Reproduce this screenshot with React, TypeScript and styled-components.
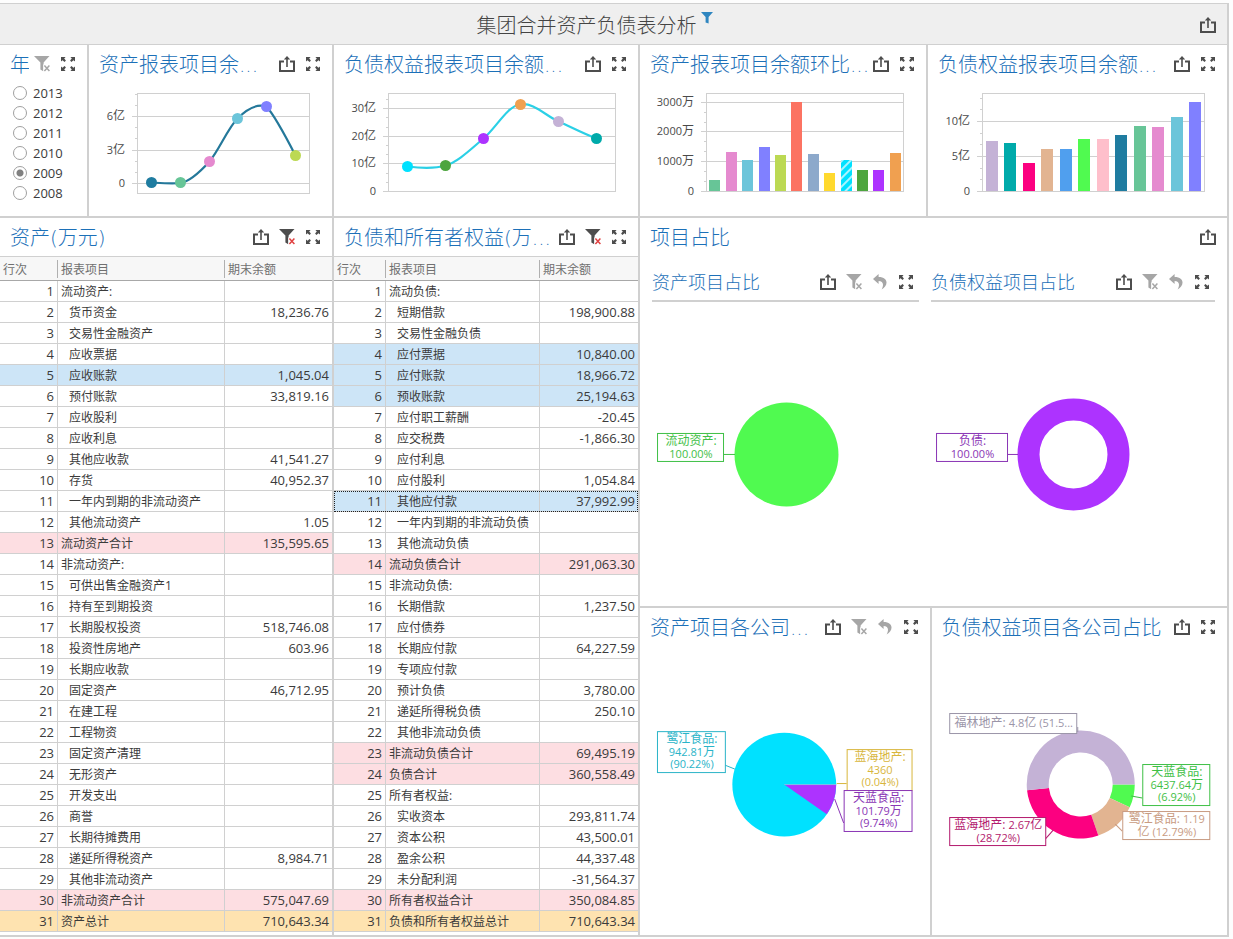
import React from "react";
import styled, { createGlobalStyle, css } from "styled-components";

const LINE = "#d0d0d0";
const INK = "#4d4d4d";
const MUTED = "#a6a6a6";
const FONT = `"Open Sans", "Noto Sans CJK SC", sans-serif`;
const TITLE_FONT = `"DejaVu Sans", "Noto Sans CJK SC", sans-serif`;

const GlobalStyle = createGlobalStyle`
  *, *::before, *::after { box-sizing: border-box; }
  body {
    margin: 0;
    background: #fdfdfd;
    color: #3b3b3b;
    font-family: ${FONT};
    font-size: 13px;
  }
`;

/* ---------- layout ---------- */

const Dashboard = styled.div`
  margin: 3px 4px 2px 0;
  background: #fff;
  border-top: 1px solid ${LINE};
`;

const TopBar = styled.header`
  display: flex;
  align-items: center;
  gap: 10px;
  height: 41px;
  padding: 3px 10px 0 0;
  background: #efefef;
  border-right: 2px solid ${LINE};
  border-bottom: 1px solid ${LINE};
`;

const Heading = styled.div`
  flex: 1;
  display: flex;
  justify-content: center;
  gap: 4px;
`;

const PageTitle = styled.h1`
  margin: 0;
  font-size: 20px;
  font-weight: 300;
  line-height: 28px;
  color: #444;
`;

const Board = styled.main`
  display: grid;
  grid-template-columns:
    minmax(0, 89fr) minmax(0, 245fr) minmax(0, 306fr)
    minmax(0, 288fr) minmax(0, 301fr);
`;

const Panel = styled.section<{ $span?: number; $grow?: number }>`
  display: flex;
  flex-direction: column;
  min-width: 0;
  min-height: 0;
  border-right: 2px solid ${LINE};
  border-bottom: 2px solid ${LINE};
  ${(p) => p.$span && css`grid-column: span ${p.$span};`}
  ${(p) => p.$grow && css`flex: ${p.$grow} 1 0;`}
`;

const PanelHead = styled.div`
  display: flex;
  flex: none;
  align-items: center;
  gap: 4px;
  height: 38px;
  padding: 2px 10px 0;
`;

const PanelTitle = styled.h2`
  flex: 1;
  min-width: 0;
  margin: 0;
  overflow: hidden;
  font-family: ${TITLE_FONT};
  font-size: 20px;
  font-weight: 300;
  line-height: 28px;
  white-space: nowrap;
  color: #1c70b8;
`;

const Actions = styled.div`
  display: flex;
  gap: 8px;
  padding-bottom: 2px;
`;

const IconButton = styled.button`
  display: flex;
  align-items: center;
  justify-content: center;
  width: 18px;
  height: 20px;
  padding: 0;
  border: 0;
  background: none;
  cursor: pointer;
  &:disabled { cursor: default; }
`;

const RightColumn = styled.div`
  grid-column: span 2;
  display: flex;
  flex-direction: column;
  min-width: 0;
`;

const SplitRow = styled.div<{ $grow: number }>`
  display: flex;
  flex: ${(p) => p.$grow} 1 0;
  min-height: 0;
`;

const GroupBody = styled.div`
  display: flex;
  flex: 1;
  gap: 12px;
  min-height: 0;
  padding: 0 12px;
`;

const SubPanel = styled.section<{ $grow: number }>`
  display: flex;
  flex: ${(p) => p.$grow} 1 0;
  flex-direction: column;
  min-width: 0;
`;

const SubHead = styled.div`
  display: flex;
  flex: none;
  align-items: center;
  height: 46px;
  padding: 10px 4px 0 0;
  border-bottom: 2px solid ${LINE};
`;

const SubTitle = styled(PanelTitle).attrs({ as: "h3" })`
  font-size: 18px;
`;

const ChartSvg = styled.svg`
  display: block;
  width: 100%;
  height: 133px;
`;

const PieSvg = styled.svg`
  display: block;
  flex: 1 1 0;
  width: 100%;
  min-height: 0;
`;

/* ---------- icons ---------- */

const ShareIcon = () => (
  <svg width="16" height="16" viewBox="0 0 16 16">
    <path d="M5 5.5H1V15H15V5.5H11" fill="none" stroke={INK} strokeWidth="2" />
    <path d="M8 1.5V11" stroke={INK} strokeWidth="1.6" />
    <path d="M8 0L11.2 3.5H4.8Z" fill={INK} />
  </svg>
);

const ExpandIcon = () => (
  <svg width="14" height="14" viewBox="0 0 14 14" fill={INK}>
    {[0, 90, 180, 270].map((a) => (
      <path key={a} d="M0 0H4.6L3.2 1.5L4.9 3.6L3.6 4.9L1.5 3.2L0 4.6Z" transform={`rotate(${a} 7 7)`} />
    ))}
  </svg>
);

const ClearFilterIcon = ({ active }: { active?: boolean }) => (
  <svg width="16" height="16" viewBox="0 0 16 16">
    <path d="M0 0H15.5L9.6 6.6V15.5L6.4 13.5V6.6Z" fill={active ? INK : MUTED} />
    <path d="M9.2 8.4H16V16H9.2Z" fill="#fff" />
    <path d="M10.4 9.6L15.4 15M15.4 9.6L10.4 15" stroke={active ? "#e04040" : MUTED} strokeWidth="1.5" />
  </svg>
);

const UndoIcon = () => (
  <svg width="14" height="16" viewBox="0 0 14 16">
    <path d="M5.6 0L0 5L5.6 10V7C9.8 7 11.4 10 8.6 15.6C15.6 11.6 15.6 3 5.6 3Z" fill={MUTED} />
  </svg>
);

const FunnelIcon = () => (
  <svg width="12" height="12" viewBox="0 0 12 12">
    <path d="M0 0H12L7.6 5V11.6L4.6 10.4V5Z" fill="#2f86c0" />
  </svg>
);

type Action = "share" | "clear" | "clearOff" | "undo" | "expand";

const ACTIONS: Record<Action, { label: string; icon: React.ReactNode; off?: boolean }> = {
  share: { label: "导出", icon: <ShareIcon /> },
  clear: { label: "清除筛选", icon: <ClearFilterIcon active /> },
  clearOff: { label: "清除筛选", icon: <ClearFilterIcon />, off: true },
  undo: { label: "返回", icon: <UndoIcon />, off: true },
  expand: { label: "最大化", icon: <ExpandIcon /> },
};

const Toolbar = ({ items }: { items: Action[] }) => (
  <Actions>
    {items.map((i) => (
      <IconButton key={i} type="button" aria-label={ACTIONS[i].label} disabled={ACTIONS[i].off}>
        {ACTIONS[i].icon}
      </IconButton>
    ))}
  </Actions>
);

const Head = ({ title, items }: { title: string; items: Action[] }) => (
  <PanelHead>
    <PanelTitle>{title}</PanelTitle>
    <Toolbar items={items} />
  </PanelHead>
);

/* ---------- year filter ---------- */

const YearList = styled.div`
  display: flex;
  flex-direction: column;
  padding-left: 13px;
`;

const YearOption = styled.label`
  display: flex;
  align-items: center;
  gap: 6px;
  height: 20px;
  line-height: 20px;
`;

const Radio = styled.input`
  appearance: none;
  width: 14px;
  height: 14px;
  margin: 0;
  border: 1px solid #a0a0a0;
  border-radius: 50%;
  background: #fff;
  &:checked { background: radial-gradient(circle, #808080 0 3px, #fff 4px); }
`;

/* ---------- charts ---------- */

const AxisText = styled.text`
  font-size: 12px;
  text-anchor: end;
  fill: #4a4a4a;
`;

const Small = styled.tspan`
  font-size: 11px;
`;

type Tick = { y: number; n: string; unit?: string };
type Frame = { x: number; r: number; top: number; bottom: number };

const Axes = ({ f, ticks, minor, labelX }: { f: Frame; ticks: Tick[]; minor: number[]; labelX: number }) => (
  <g>
    <rect x={f.x + 0.5} y={f.top + 0.5} width={f.r - f.x} height={f.bottom - f.top} fill="none" stroke={LINE} />
    {minor.map((y) => (
      <path key={y} d={`M${f.x - 2} ${y + 0.5}H${f.x}`} stroke={LINE} />
    ))}
    {ticks.map((t) => (
      <g key={t.y}>
        <path d={`M${f.x - 5} ${t.y + 0.5}H${f.r}`} stroke={LINE} />
        <AxisText x={labelX} y={t.y + 4}>
          <Small>{t.n}</Small>
          {t.unit}
        </AxisText>
      </g>
    ))}
  </g>
);

type Dot = [number, number, string];

const LineChart = (p: {
  box: string; f: Frame; ticks: Tick[]; minor: number[]; labelX: number;
  curve: string; color: string; dots: Dot[];
}) => (
  <ChartSvg viewBox={p.box}>
    <Axes f={p.f} ticks={p.ticks} minor={p.minor} labelX={p.labelX} />
    <path d={p.curve} fill="none" stroke={p.color} strokeWidth="2.2" />
    {p.dots.map(([x, y, c]) => (
      <circle key={x} cx={x} cy={y} r="5.5" fill={c} />
    ))}
  </ChartSvg>
);

const BarChart = (p: {
  box: string; f: Frame; ticks: Tick[]; minor: number[]; labelX: number; barWidth: number; bars: Dot[];
}) => (
  <ChartSvg viewBox={p.box}>
    <defs>
      <pattern id="stripes" width="6" height="6" patternUnits="userSpaceOnUse" patternTransform="rotate(45)">
        <rect width="6" height="6" fill="#00e1ff" />
        <rect width="2" height="6" fill="#a8f3ff" />
      </pattern>
    </defs>
    <Axes f={p.f} ticks={p.ticks} minor={p.minor} labelX={p.labelX} />
    {p.bars.map(([x, y, c]) => (
      <rect key={x} x={x} y={y} width={p.barWidth} height={p.f.bottom - y} fill={c} />
    ))}
  </ChartSvg>
);

const slicePath = (cx: number, cy: number, R: number, r: number, from: number, to: number) => {
  const pt = (rad: number, deg: number) => {
    const a = (deg * Math.PI) / 180;
    return `${(cx + rad * Math.cos(a)).toFixed(2)} ${(cy + rad * Math.sin(a)).toFixed(2)}`;
  };
  const big = to - from > 180 ? 1 : 0;
  return `M${pt(R, from)}A${R} ${R} 0 ${big} 1 ${pt(R, to)}L${pt(r, to)}A${r} ${r} 0 ${big} 0 ${pt(r, from)}Z`;
};

const CalloutText = styled.text`
  font-size: 12px;
  text-anchor: middle;
`;

const BASELINES = [12, 25, 37];

type Run = string | { s: string };

const Callout = ({ x, y, w, h, color, leader, lines }: {
  x: number; y: number; w: number; h: number; color: string; leader: string; lines: Run[][];
}) => (
  <g>
    <path d={leader} fill="none" stroke={color} />
    <rect x={x + 0.5} y={y + 0.5} width={w} height={h} fill="#fff" stroke={color} />
    {lines.map((runs, i) => (
      <CalloutText key={i} x={x + w / 2 + 1} y={y + (lines.length === 1 ? 14 : BASELINES[i])} fill={color}>
        {runs.map((r, j) => (typeof r === "string" ? r : <Small key={j}>{r.s}</Small>))}
      </CalloutText>
    ))}
  </g>
);

/* ---------- tables ---------- */

const Table = styled.table`
  width: 100%;
  border-top: 1px solid ${LINE};
  border-collapse: separate;
  border-spacing: 0;
  table-layout: fixed;
  margin-bottom: 3px;
`;

const HeadCell = styled.th`
  height: 24px;
  padding: 2px 3px 0;
  border-bottom: 1px solid #a8a8a8;
  background: #f7f7f7;
  font-size: 12px;
  font-weight: 400;
  line-height: 20px;
  text-align: left;
  color: #707070;
  & + & {
    padding-left: 4px;
    background: linear-gradient(#b0b0b0, #b0b0b0) 0 3px / 1px 18px no-repeat #f7f7f7;
  }
`;

type Tone = "plain" | "selected" | "focus" | "subtotal" | "total";

const TONES: Record<Tone, string> = {
  plain: "#fff",
  selected: "#cde5f7",
  focus: "#cde5f7",
  subtotal: "#fddee2",
  total: "#fee3b0",
};

const Row = styled.tr<{ $tone: Tone }>`
  background: ${(p) => TONES[p.$tone]};
  ${(p) => p.$tone === "focus" && css`outline: 1px dotted #222; outline-offset: -1px;`}
`;

const Cell = styled.td<{ $kind: "index" | "name" | "amount"; $indent?: boolean }>`
  height: 21px;
  padding: 0 3px;
  border-bottom: 1px solid ${LINE};
  line-height: 20px;
  text-align: right;
  white-space: nowrap;
  ${(p) => p.$kind !== "index" && css`border-left: 1px solid ${LINE};`}
  ${(p) => p.$kind === "name" && css`
    padding-top: 2px;
    padding-left: ${p.$indent ? 11 : 3}px;
    font-size: 12px;
    line-height: 18px;
    text-align: left;
  `}
`;

type Item = [name: string, amount?: string, tone?: Tone];

/* A leading ">" puts the item one level down. */
const ASSETS: Item[] = [
  ["流动资产:"], [">货币资金", "18,236.76"], [">交易性金融资产"], [">应收票据"],
  [">应收账款", "1,045.04", "selected"], [">预付账款", "33,819.16"], [">应收股利"], [">应收利息"],
  [">其他应收款", "41,541.27"], [">存货", "40,952.37"], [">一年内到期的非流动资产"],
  [">其他流动资产", "1.05"], ["流动资产合计", "135,595.65", "subtotal"], ["非流动资产:"],
  [">可供出售金融资产1"], [">持有至到期投资"], [">长期股权投资", "518,746.08"],
  [">投资性房地产", "603.96"], [">长期应收款"], [">固定资产", "46,712.95"], [">在建工程"],
  [">工程物资"], [">固定资产清理"], [">无形资产"], [">开发支出"], [">商誉"], [">长期待摊费用"],
  [">递延所得税资产", "8,984.71"], [">其他非流动资产"],
  ["非流动资产合计", "575,047.69", "subtotal"], ["资产总计", "710,643.34", "total"],
];

const LIABILITIES: Item[] = [
  ["流动负债:"], [">短期借款", "198,900.88"], [">交易性金融负债"],
  [">应付票据", "10,840.00", "selected"], [">应付账款", "18,966.72", "selected"],
  [">预收账款", "25,194.63", "selected"], [">应付职工薪酬", "-20.45"], [">应交税费", "-1,866.30"],
  [">应付利息"], [">应付股利", "1,054.84"], [">其他应付款", "37,992.99", "focus"],
  [">一年内到期的非流动负债"], [">其他流动负债"], ["流动负债合计", "291,063.30", "subtotal"],
  ["非流动负债:"], [">长期借款", "1,237.50"], [">应付债券"], [">长期应付款", "64,227.59"],
  [">专项应付款"], [">预计负债", "3,780.00"], [">递延所得税负债", "250.10"], [">其他非流动负债"],
  ["非流动负债合计", "69,495.19", "subtotal"], ["负债合计", "360,558.49", "subtotal"],
  ["所有者权益:"], [">实收资本", "293,811.74"], [">资本公积", "43,500.01"],
  [">盈余公积", "44,337.48"], [">未分配利润", "-31,564.37"],
  ["所有者权益合计", "350,084.85", "subtotal"], ["负债和所有者权益总计", "710,643.34", "total"],
];

const Ledger = ({ items, indexWidth, amountWidth }: { items: Item[]; indexWidth: number; amountWidth: number }) => (
  <Table>
    <colgroup>
      <col width={indexWidth} />
      <col />
      <col width={amountWidth} />
    </colgroup>
    <thead>
      <tr>
        <HeadCell scope="col">行次</HeadCell>
        <HeadCell scope="col">报表项目</HeadCell>
        <HeadCell scope="col">期末余额</HeadCell>
      </tr>
    </thead>
    <tbody>
      {items.map(([name, amount, tone = "plain"], i) => (
        <Row key={i} $tone={tone}>
          <Cell $kind="index">{i + 1}</Cell>
          <Cell $kind="name" $indent={name.startsWith(">")}>{name.replace(">", "")}</Cell>
          <Cell $kind="amount">{amount}</Cell>
        </Row>
      ))}
    </tbody>
  </Table>
);

const GREEN = "#3fc046";
const PURPLE = "#8a35b5";

export default function App() {
  return (
    <>
      <GlobalStyle />
      <Dashboard>
        <TopBar>
          <Heading>
            <PageTitle>集团合并资产负债表分析</PageTitle>
            <FunnelIcon />
          </Heading>
          <Toolbar items={["share"]} />
        </TopBar>
        <Board>
          <Panel>
            <Head title="年" items={["clearOff", "expand"]} />
            <YearList>
              {[2013, 2012, 2011, 2010, 2009, 2008].map((y) => (
                <YearOption key={y}>
                  <Radio type="radio" name="year" defaultChecked={y === 2009} />
                  {y}
                </YearOption>
              ))}
            </YearList>
          </Panel>
          <Panel>
            <Head title="资产报表项目余..." items={["share", "expand"]} />
            <LineChart
              box="89 83 243 133"
              f={{ x: 137, r: 309, top: 93, bottom: 193 }}
              labelX={125}
              ticks={[{ y: 116, n: "6", unit: "亿" }, { y: 150, n: "3", unit: "亿" }, { y: 183, n: "0" }]}
              minor={[94, 105, 127, 138, 161, 172]}
              color="#24789a"
              curve="M151.5 182.5C160 183 172 184 180.5 183C190 181.500 200 172 209.5 161.5C219 150 228 128 237.5 118.5C246 110 256 103 266.500 106.500C275 116 286 137 295.500 155.500"
              dots={[
                [151.5, 182.5, "#1f7ca0"], [180.5, 182.5, "#67c597"], [209.5, 161.5, "#e58acf"],
                [237.5, 118.5, "#6cc5da"], [266.5, 106.5, "#8080ff"], [295.5, 155.5, "#bcd953"],
              ]}
            />
          </Panel>
          <Panel>
            <Head title="负债权益报表项目余额..." items={["share", "expand"]} />
            <LineChart
              box="334 83 304 133"
              f={{ x: 388, r: 615, top: 93, bottom: 191 }}
              labelX={376}
              ticks={[
                { y: 108, n: "30", unit: "亿" }, { y: 136, n: "20", unit: "亿" },
                { y: 163, n: "10", unit: "亿" }, { y: 191, n: "0" },
              ]}
              minor={[99, 117, 127, 145, 154, 173, 182]}
              color="#2bd0e6"
              curve="M407.500 166.500C420 168 434 169 445.500 165.500C458 162 471 149 483.500 138.500C496 128 508 105 520.500 104.500C533 102 546 116 558.500 121.500C571 127 584 134 596.500 138.500"
              dots={[
                [407.5, 166.5, "#00e1ff"], [445.5, 165.5, "#4da53f"], [483.5, 138.5, "#ad33ff"],
                [520.5, 104.5, "#f0a050"], [558.5, 121.5, "#c4b2d6"], [596.5, 138.5, "#00aaaa"],
              ]}
            />
          </Panel>
          <Panel>
            <Head title="资产报表项目余额环比..." items={["share", "expand"]} />
            <BarChart
              box="640 83 286 133"
              f={{ x: 706, r: 903, top: 93, bottom: 191 }}
              labelX={694}
              ticks={[
                { y: 102, n: "3000", unit: "万" }, { y: 131, n: "2000", unit: "万" },
                { y: 161, n: "1000", unit: "万" }, { y: 191, n: "0" },
              ]}
              minor={[112, 122, 141, 151, 171, 181]}
              barWidth={11}
              bars={[
                [709, 180, "#67c597"], [726, 152, "#e58acf"], [742, 160, "#6cc5da"], [759, 147, "#8080ff"],
                [775, 155, "#bcd953"], [791, 102, "#fc7362"], [808, 154, "#8da9cb"], [824, 173, "#ffd92e"],
                [841, 160, "url(#stripes)"], [857, 170, "#4da53f"], [873, 170, "#ad33ff"], [890, 153, "#f0a050"],
              ]}
            />
          </Panel>
          <Panel>
            <Head title="负债权益报表项目余额..." items={["share", "expand"]} />
            <BarChart
              box="928 83 299 133"
              f={{ x: 982, r: 1204, top: 93, bottom: 191 }}
              labelX={970}
              ticks={[{ y: 121, n: "10", unit: "亿" }, { y: 156, n: "5", unit: "亿" }, { y: 191, n: "0" }]}
              minor={[98, 109, 133, 144, 168, 179]}
              barWidth={12}
              bars={[
                [986, 141, "#c4b2d6"], [1004, 143, "#00aaaa"], [1023, 163, "#fc0080"], [1041, 149, "#e2b491"],
                [1060, 149, "#509fee"], [1078, 139, "#50fa50"], [1097, 139, "#febfcb"], [1115, 135, "#1f7ca0"],
                [1134, 126, "#67c597"], [1152, 127, "#e58acf"], [1171, 117, "#6cc5da"], [1189, 102, "#8080ff"],
              ]}
            />
          </Panel>

          <Panel $span={2}>
            <Head title="资产(万元)" items={["share", "clear", "expand"]} />
            <Ledger items={ASSETS} indexWidth={57} amountWidth={108} />
          </Panel>
          <Panel>
            <Head title="负债和所有者权益(万..." items={["share", "clear", "expand"]} />
            <Ledger items={LIABILITIES} indexWidth={51} amountWidth={99} />
          </Panel>

          <RightColumn>
            <Panel $grow={389}>
              <Head title="项目占比" items={["share"]} />
              <GroupBody>
                <SubPanel $grow={267}>
                  <SubHead>
                    <SubTitle>资产项目占比</SubTitle>
                    <Toolbar items={["share", "clearOff", "undo", "expand"]} />
                  </SubHead>
                  <PieSvg viewBox="652 302 267 304">
                    <circle cx="786.5" cy="454.5" r="52" fill="#50fa50" />
                    <Callout x={657} y={433} w={66} h={28} color={GREEN} leader="M723 454.500H735"
                      lines={[["流动资产:"], [{ s: "100.00%" }]]} />
                  </PieSvg>
                </SubPanel>
                <SubPanel $grow={284}>
                  <SubHead>
                    <SubTitle>负债权益项目占比</SubTitle>
                    <Toolbar items={["share", "clearOff", "undo", "expand"]} />
                  </SubHead>
                  <PieSvg viewBox="931 302 284 304">
                    <circle cx="1073.5" cy="454.5" r="45" fill="none" stroke="#ad33ff" strokeWidth="22" />
                    <Callout x={936} y={433} w={71} h={28} color={PURPLE} leader="M1007 454.500H1018"
                      lines={[["负债:"], [{ s: "100.00%" }]]} />
                  </PieSvg>
                </SubPanel>
              </GroupBody>
            </Panel>
            <SplitRow $grow={330}>
              <Panel $grow={290}>
                <Head title="资产项目各公司..." items={["share", "clearOff", "undo", "expand"]} />
                <PieSvg viewBox="640 646 290 289">
                  <circle cx="784.5" cy="784.5" r="52" fill="#00e1ff" />
                  <path d={slicePath(784.5, 784.5, 52, 0, 0, 35)} fill="#ad33ff" />
                  <path d="M784.500 784.500H836.500" stroke="#7bbfe8" />
                  <Callout x={657} y={731} w={68} h={41} color="#2ab4c8" leader="M725 765L735 769"
                    lines={[["鹭江食品:"], [{ s: "942.81" }, "万"], [{ s: "(90.22%)" }]]} />
                  <Callout x={847} y={749} w={65} h={41} color="#d8b63c" leader="M837 783.500H847"
                    lines={[["蓝海地产:"], [{ s: "4360" }], [{ s: "(0.04%)" }]]} />
                  <Callout x={844} y={790} w={68} h={41} color={PURPLE} leader="M835 799L844 823"
                    lines={[["天蓝食品:"], [{ s: "101.79" }, "万"], [{ s: "(9.74%)" }]]} />
                </PieSvg>
              </Panel>
              <Panel $grow={296}>
                <Head title="负债权益项目各公司占比" items={["share", "expand"]} />
                <PieSvg viewBox="932 646 295 289">
                  <path d={slicePath(1080.5, 784.5, 54, 32, 0, 25)} fill="#50fa50" />
                  <path d={slicePath(1080.5, 784.5, 54, 32, 25, 71)} fill="#e2b491" />
                  <path d={slicePath(1080.5, 784.5, 54, 32, 71, 174)} fill="#fc0080" />
                  <path d={slicePath(1080.5, 784.5, 54, 32, 174, 360)} fill="#c4b2d6" />
                  <Callout x={949} y={713} w={127} h={20} color="#9b95a8" leader="M1077.500 727V732"
                    lines={[["福林地产: ", { s: "4.8" }, "亿 ", { s: "(51.5..." }]]} />
                  <Callout x={949} y={817} w={96} h={28} color="#b3196d" leader="M1045 839L1053 830"
                    lines={[["蓝海地产: ", { s: "2.67" }, "亿"], [{ s: "(28.72%)" }]]} />
                  <Callout x={1122} y={811} w={87} h={28} color="#c89b82" leader="M1122 831L1115 824"
                    lines={[["鹭江食品: ", { s: "1.19" }], ["亿 ", { s: "(12.79%)" }]]} />
                  <Callout x={1142} y={764} w={67} h={41} color={GREEN} leader="M1131 796L1142 798"
                    lines={[["天蓝食品:"], [{ s: "6437.64" }, "万"], [{ s: "(6.92%)" }]]} />
                </PieSvg>
              </Panel>
            </SplitRow>
          </RightColumn>
        </Board>
      </Dashboard>
    </>
  );
}
